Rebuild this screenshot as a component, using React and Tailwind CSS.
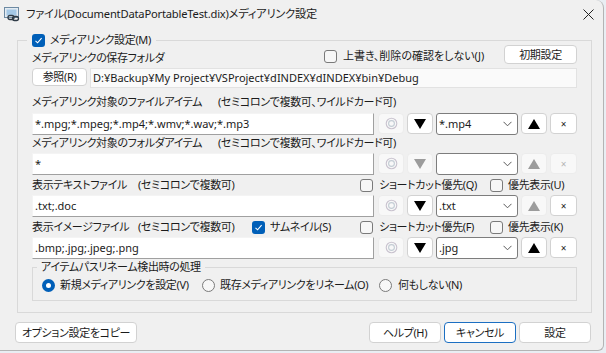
import React from "react";

const FONT = {
  fontFamily: '"Noto Sans", "Noto Sans CJK JP", sans-serif',
};

function Check({ checked }) {
  return checked ? (
    <span className="inline-flex w-[13px] h-[13px] shrink-0 items-center justify-center rounded-[3px] bg-[#005fb8]">
      <svg width="9" height="9" viewBox="0 0 9 9">
        <path d="M1.5 4.8 L3.6 6.8 L7.6 2.2" fill="none" stroke="#fff" strokeWidth="1.1" />
      </svg>
    </span>
  ) : (
    <span className="inline-block w-[13px] h-[13px] shrink-0 rounded-[3px] border border-[#7a7a7a] bg-[#f7f7f7]" />
  );
}

function Radio({ checked }) {
  return checked ? (
    <span className="inline-flex w-[13px] h-[13px] shrink-0 items-center justify-center rounded-full bg-[#005fb8]">
      <span className="w-[5px] h-[5px] rounded-full bg-white" />
    </span>
  ) : (
    <span className="inline-block w-[13px] h-[13px] shrink-0 rounded-full border border-[#7a7a7a] bg-[#f7f7f7]" />
  );
}

function Btn({ children, className = "" }) {
  return (
    <div
      className={
        "flex items-center justify-center rounded-[4px] border bg-white text-[#1b1b1b] whitespace-nowrap " +
        className
      }
    >
      {children}
    </div>
  );
}

function Reset() {
  return (
    <div className="flex w-[26px] h-[21px] items-center justify-center rounded-[4px] border border-[#ececec] bg-[#f8f8f8]">
      <svg width="13" height="13" viewBox="0 0 13 13">
        <circle cx="6.5" cy="6.5" r="5.3" fill="none" stroke="#c9c3cf" strokeWidth="1.1" />
        <circle cx="6.5" cy="6.5" r="2.9" fill="none" stroke="#c3ccd4" strokeWidth="1.1" />
      </svg>
    </div>
  );
}

function Arrow({ up, disabled }) {
  const c = disabled ? "#9c9c9c" : "#000";
  return (
    <div
      className={
        "flex w-[26px] h-[21px] items-center justify-center rounded-[4px] border " +
        (disabled ? "border-[#ececec] bg-[#f8f8f8]" : "border-[#d2d2d2] bg-white")
      }
    >
      <svg width="12" height="10" viewBox="0 0 12 10">
        {up ? <polygon points="6,0 12,10 0,10" fill={c} /> : <polygon points="0,0 12,0 6,10" fill={c} />}
      </svg>
    </div>
  );
}

function Del({ disabled }) {
  return (
    <div
      className={
        "flex w-[27px] h-[21px] items-center justify-center rounded-[4px] border text-[10px] " +
        (disabled ? "border-[#ececec] bg-[#f8f8f8] text-[#b4b4b4]" : "border-[#d2d2d2] bg-white text-[#1b1b1b]")
      }
    >
      ×
    </div>
  );
}

function Combo({ value }) {
  return (
    <div className="flex w-[82px] h-[22px] items-center justify-between rounded-[3px] border border-[#7d7d7d] bg-white pl-[2px] pr-[5px] tracking-normal">
      <span>{value}</span>
      <svg width="9" height="6" viewBox="0 0 9 6">
        <path d="M0.5 0.8 L4.5 4.8 L8.5 0.8" fill="none" stroke="#5a5a5a" strokeWidth="1" />
      </svg>
    </div>
  );
}

function ItemRow({ value, combo, disabled, upDisabled, className = "" }) {
  return (
    <div className={"flex items-start gap-[3px] " + className}>
      <div className="flex flex-1 h-[22px] items-center border border-[#f4f4f4] border-r-[#a0a0a0] border-b-[#a0a0a0] bg-white pl-[2px] tracking-normal">
        {value}
      </div>
      <div className="ml-[1px]">
        <Reset />
      </div>
      <Arrow disabled={disabled} />
      <Combo value={combo} />
      <Arrow up disabled={disabled || upDisabled} />
      <Del disabled={disabled} />
    </div>
  );
}

function TwoChecks({ a, b }) {
  return (
    <div className="ml-auto flex w-[217px] items-center">
      <div className="flex w-[130px] items-center gap-[6px]">
        <Check />
        <span>{a}</span>
      </div>
      <div className="flex items-center gap-[5px]">
        <Check />
        <span>{b}</span>
      </div>
    </div>
  );
}

export default function App() {
  return (
    <div
      className="w-[606px] h-[353px] bg-[#e9eef3] text-[11px] leading-[16px] tracking-[-0.35px] whitespace-nowrap [font-feature-settings:'palt']"
      style={FONT}
    >
      <div className="flex flex-col w-[604px] h-[351px] rounded-tr-[8px] rounded-br-[6px] border-r border-b border-[#b4b4b4] bg-[#f0f0f0] text-[#1b1b1b]">
        <div className="flex h-[28px] items-center pl-[4px] pr-[9px]">
          <svg width="17" height="16" viewBox="0 0 17 16">
            <rect x="0.5" y="1.5" width="14" height="10" fill="#e3ebf2" stroke="#6d8aa3" />
            <rect x="2.5" y="3.5" width="10" height="6" fill="#a4c8e6" />
            <rect x="4" y="9.5" width="6" height="4" rx="2" fill="none" stroke="#2f3b46" strokeWidth="1.3" />
            <rect x="8.5" y="10.5" width="6" height="4" rx="2" fill="none" stroke="#2f3b46" strokeWidth="1.3" />
          </svg>
          <span className="ml-[5px] text-[11.2px] tracking-[-0.2px]">ファイル(DocumentDataPortableTest.dix)メディアリンク設定</span>
          <svg className="ml-auto" width="11" height="11" viewBox="0 0 11 11">
            <path d="M0.5 0.5 L10.5 10.5 M10.5 0.5 L0.5 10.5" stroke="#222" strokeWidth="1" />
          </svg>
        </div>

        <fieldset className="ml-[17px] mt-[4px] w-[575px] h-[281px] border border-[#d9d9d9] px-[14px]">
          <legend className="flex h-[16px] items-center gap-[5px] -ml-[5px] px-[5px]">
            <Check checked />
            <span>メディアリンク設定(M)</span>
          </legend>

          <div className="flex items-start h-[19px] -mt-[3px]">
            <span className="mt-[5px]">メディアリンクの保存フォルダ</span>
            <div className="ml-auto flex w-[180px] items-center gap-[6px] mt-[3px]">
              <Check />
              <span className="tracking-[0px]">上書き、削除の確認をしない(J)</span>
            </div>
            <Btn className="w-[73px] h-[19px] border-[#d2d2d2]">初期設定</Btn>
          </div>

          <div className="flex items-start gap-[3px] mt-[4px]">
            <Btn className="w-[55px] h-[18px] border-[#d2d2d2]">参照(R)</Btn>
            <div className="flex flex-1 h-[20px] items-center border border-[#e2e2e2] bg-[#fafafa] pl-[2px] tracking-normal">
              D:¥Backup¥My Project¥VSProject¥dINDEX¥dINDEX¥bin¥Debug
            </div>
          </div>

          <div className="flex mt-[6px]">
            <span className="w-[186px]">メディアリンク対象のファイルアイテム</span>
            <span>(セミコロンで複数可、ワイルドカード可)</span>
          </div>
          <ItemRow className="mt-[3px]" value="*.mpg;*.mpeg;*.mp4;*.wmv;*.wav;*.mp3" combo="*.mp4" />

          <div className="flex">
            <span className="w-[186px]">メディアリンク対象のフォルダアイテム</span>
            <span>(セミコロンで複数可、ワイルドカード可)</span>
          </div>
          <ItemRow className="mt-[2px]" value="*" combo="" disabled />

          <div className="flex items-center mt-[2px]">
            <span className="w-[106px]">表示テキストファイル</span>
            <span>(セミコロンで複数可)</span>
            <TwoChecks a="ショートカット優先(Q)" b="優先表示(U)" />
          </div>
          <ItemRow className="mt-[2px]" value=".txt;.doc" combo=".txt" upDisabled />

          <div className="flex items-center mt-[2px]">
            <span className="w-[106px]">表示イメージファイル</span>
            <span className="w-[114px]">(セミコロンで複数可)</span>
            <div className="flex items-center gap-[5px]">
              <Check checked />
              <span>サムネイル(S)</span>
            </div>
            <TwoChecks a="ショートカット優先(F)" b="優先表示(K)" />
          </div>
          <ItemRow className="mt-[2px]" value=".bmp;.jpg;.jpeg;.png" combo=".jpg" />

          <fieldset className="h-[42px] border border-[#d9d9d9] pl-[4px]">
            <legend className="px-[4px]">アイテムパスリネーム検出時の処理</legend>
            <div className="flex items-center h-[16px] mt-[2px] ml-[5px]">
              <Radio checked />
              <span className="ml-[5px] w-[142px]">新規メディアリンクを設定(V)</span>
              <Radio />
              <span className="ml-[5px] w-[159px]">既存メディアリンクをリネーム(O)</span>
              <Radio />
              <span className="ml-[6px]">何もしない(N)</span>
            </div>
          </fieldset>
        </fieldset>

        <div className="flex items-center mt-[9px] pl-[15px] pr-[12px]">
          <Btn className="w-[122px] h-[21px] border-[#d2d2d2]">オプション設定をコピー</Btn>
          <Btn className="ml-auto w-[72px] h-[21px] border-[#d2d2d2]">ヘルプ(H)</Btn>
          <Btn className="ml-[3px] w-[72px] h-[21px] border-[#1c6fc2]">キャンセル</Btn>
          <Btn className="ml-[3px] w-[72px] h-[21px] border-[#d2d2d2]">設定</Btn>
        </div>
      </div>
    </div>
  );
}
